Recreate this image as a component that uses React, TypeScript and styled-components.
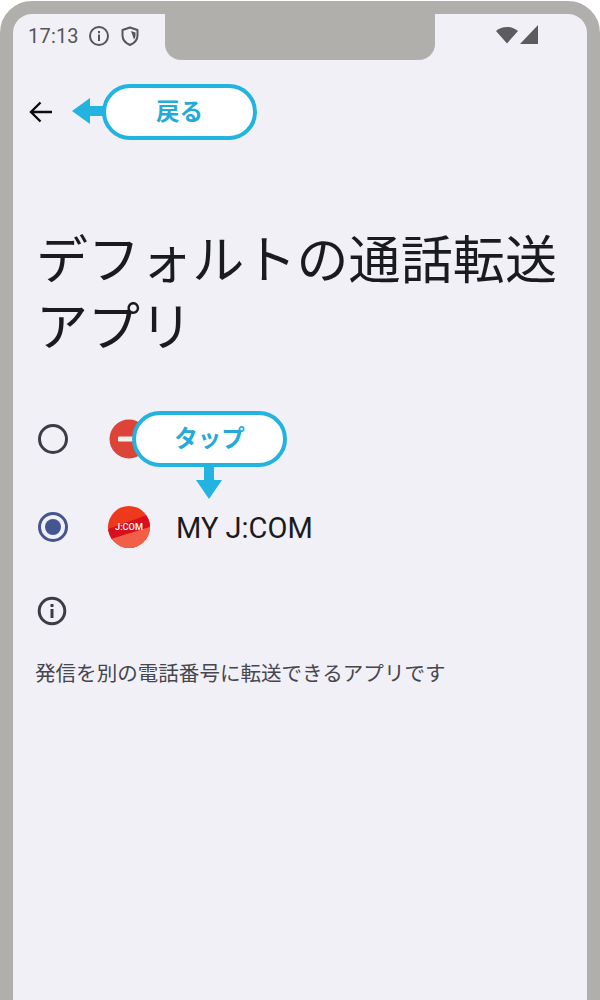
import React from "react";
import styled, { createGlobalStyle } from "styled-components";

const Global = createGlobalStyle`
  html, body { margin: 0; padding: 0; background: #fff; }
  body { width: 600px; height: 1000px; overflow: hidden; font-family: Roboto, "Noto Sans CJK JP", sans-serif; }
`;

const Phone = styled.div`
  position: relative;
  box-sizing: border-box;
  width: 600px;
  height: 1040px;
  margin-top: 1px;
  background: #f1f0f7;
  border: 13px solid #b0afac;
  border-radius: 32px;
  overflow: hidden;
`;
const Notch = styled.div`
  position: absolute;
  top: 0;
  left: 152px;
  width: 270px;
  height: 46px;
  background: #b0afac;
  border-radius: 0 0 16px 16px;
`;
const StatusBar = styled.div`
  display: flex;
  align-items: center;
  height: 44px;
  padding: 0 0 0 15px;
  color: #555559;
`;
const Time = styled.span`
  font-size: 20px;
  letter-spacing: 0.2px;
  margin-right: 9px;
`;
const StatusIcon = styled.svg`
  display: block;
  flex: none;
  margin-right: 10px;
`;
const StatusRight = styled.div`
  display: flex;
  align-items: center;
  gap: 2px;
  margin-left: auto;
  margin-right: 49px;
  margin-top: -3px;
`;
const TopBar = styled.div`
  display: flex;
  align-items: center;
  height: 54px;
  padding-left: 15px;
  margin-top: 27px;
`;
const Title = styled.h1`
  margin: 84px 0 0 23px;
  width: 540px;
  font: 400 52px/67px "Noto Sans CJK JP", sans-serif;
  letter-spacing: 0.1px;
  color: #1a1b20;
`;
const Options = styled.div`
  margin-top: 60px;
  display: flex;
  flex-direction: column;
  gap: 44px;
`;
const Option = styled.div`
  display: flex;
  align-items: center;
  height: 44px;
  padding-left: 25px;
`;
const Radio = styled.div<{ $on?: boolean }>`
  box-sizing: border-box;
  width: 30px;
  height: 30px;
  border-radius: 50%;
  border: 3px solid ${(p) => (p.$on ? "#45558f" : "#3c3c44")};
  display: flex;
  align-items: center;
  justify-content: center;
  flex: none;
  margin-right: 40px;
`;
const RadioDot = styled.div`
  width: 16px;
  height: 16px;
  border-radius: 50%;
  background: #45558f;
`;
const AppIcon = styled.svg`
  display: block;
  flex: none;
  margin-right: 26px;
`;
const AppName = styled.span`
  font-size: 29px;
  padding-top: 2px;
  color: #1a1b20;
`;
const InfoIcon = styled.svg`
  display: block;
  margin: 47px 0 0 24px;
`;
const Description = styled.p`
  margin: 31px 0 0 22px;
  font: 400 20.55px/30px "Noto Sans CJK JP", sans-serif;
  color: #46464e;
`;
const Callout = styled.div<{ $left: number; $top: number }>`
  position: absolute;
  left: ${(p) => p.$left}px;
  top: ${(p) => p.$top}px;
  box-sizing: border-box;
  width: 155px;
  height: 56px;
  padding-bottom: 2px;
  border: 4px solid #22b3e0;
  border-radius: 28px;
  background: #fff;
  display: flex;
  align-items: center;
  justify-content: center;
  font: 700 23.5px/1 "Noto Sans CJK JP", sans-serif;
  color: #22aadb;
`;
const Arrow = styled.svg<{ $left: number; $top: number }>`
  position: absolute;
  left: ${(p) => p.$left}px;
  top: ${(p) => p.$top}px;
`;

export default function App() {
  return (
    <>
      <Global />
      <Phone>
        <Notch />
        <StatusBar>
          <Time>17:13</Time>
          <StatusIcon width="22" height="22" viewBox="0 0 22 22" fill="none">
            <circle cx="11" cy="11" r="9" stroke="#555559" strokeWidth="2" />
            <rect x="10" y="9.5" width="2" height="6.5" fill="#555559" />
            <rect x="10" y="6" width="2" height="2.2" fill="#555559" />
          </StatusIcon>
          <StatusIcon width="20" height="22" viewBox="0 0 20 22" fill="none">
            <path d="M10 2.5 L17.5 5 V10.5 C17.5 15 14.5 18 10 20 C5.5 18 2.5 15 2.5 10.5 V5 Z" stroke="#555559" strokeWidth="2" strokeLinejoin="round" />
            <path d="M11 6 L15.5 7.5 V10.5 C15.5 12 15 13.3 14 14.5 Z" fill="#555559" />
          </StatusIcon>
          <StatusRight>
            <svg width="22" height="19" viewBox="0 0 22 19">
              <path d="M0 6 C6 0.5 16 0.5 22 6 L11 18.5 Z" fill="#5c5c5e" />
            </svg>
            <svg width="18" height="19" viewBox="0 0 18 19">
              <path d="M18 0 V19 H0 Z" fill="#5c5c5e" />
            </svg>
          </StatusRight>
        </StatusBar>
        <TopBar>
          <svg width="26" height="24" viewBox="0 0 26 24" fill="none">
            <path d="M24 12 H3 M12.5 2.5 L3 12 L12.5 21.5" stroke="#0c0c0e" strokeWidth="2.4" />
          </svg>
        </TopBar>
        <Title>
          デフォルトの通話転送
          <br />
          アプリ
        </Title>
        <Options>
          <Option>
            <Radio />
            <AppIcon width="42" height="44" viewBox="0 0 42 44">
              <circle cx="21" cy="22" r="19.5" fill="#db4437" />
              <rect x="10" y="19.5" width="22" height="5" rx="1" fill="#f5f0ee" />
            </AppIcon>
          </Option>
          <Option>
            <Radio $on>
              <RadioDot />
            </Radio>
            <AppIcon width="42" height="42" viewBox="0 0 42 42">
              <defs>
                <clipPath id="jc">
                  <circle cx="21" cy="21" r="21" />
                </clipPath>
              </defs>
              <g clipPath="url(#jc)">
                <rect width="42" height="42" fill="#ed3a1c" />
                <path d="M0 23 L42 8 V21 L0 34 Z" fill="#d80f1c" />
                <path d="M0 34 L42 21 V42 H0 Z" fill="#f15f48" />
              </g>
              <text x="21" y="24" textAnchor="middle" fontFamily="Roboto, sans-serif" fontSize="9.2" fontWeight="500" fill="#fff">J:COM</text>
            </AppIcon>
            <AppName>MY J:COM</AppName>
          </Option>
        </Options>
        <InfoIcon width="30" height="30" viewBox="0 0 30 30" fill="none">
          <circle cx="15" cy="15" r="12.8" stroke="#3c3c44" strokeWidth="3" />
          <rect x="13.5" y="13" width="3" height="9" fill="#3c3c44" />
          <rect x="13.5" y="8" width="3" height="3" fill="#3c3c44" />
        </InfoIcon>
        <Description>発信を別の電話番号に転送できるアプリです</Description>

        <Arrow $left={59} $top={84} width="36" height="26" viewBox="0 0 36 26">
          <path d="M0 13 L18 0 V8 H36 V18 H18 V26 Z" fill="#22b3e0" />
        </Arrow>
        <Callout $left={89} $top={70}>戻る</Callout>

        <Arrow $left={183} $top={450} width="26" height="36" viewBox="0 0 26 36">
          <path d="M8 0 H18 V16 H26 L13 35 L0 16 H8 Z" fill="#22b3e0" />
        </Arrow>
        <Callout $left={119} $top={397}>タップ</Callout>
      </Phone>
    </>
  );
}
